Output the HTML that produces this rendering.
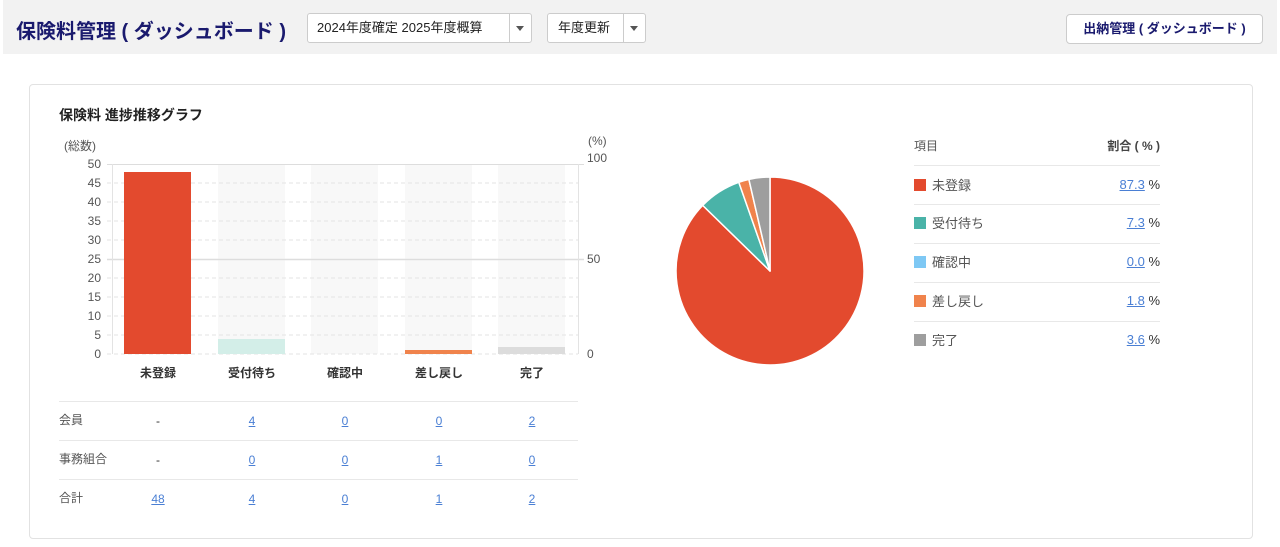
<!DOCTYPE html>
<html><head><meta charset="utf-8"><style>
*{margin:0;padding:0;box-sizing:border-box}
body{width:1280px;height:547px;background:#fff;font-family:"Liberation Sans","Noto Sans CJK JP",sans-serif;position:relative;overflow:hidden;color:#333}
.a{position:absolute;white-space:nowrap}
.hdr{position:absolute;left:3px;top:0;width:1274px;height:54px;background:#f2f2f2}
.sel{position:absolute;top:13px;height:30px;background:#fff;border:1px solid #ccc;border-radius:3px;font-size:13px;color:#222;line-height:28px}
.sel .c{position:absolute;right:0;top:0;width:22px;height:28px;border-left:1px solid #ccc}
.sel .c:after{content:"";position:absolute;left:6px;top:12px;border:4px solid transparent;border-top:5px solid #555}
.card{position:absolute;left:29px;top:84px;width:1224px;height:455px;border:1px solid #e2e2e2;border-radius:4px}
.yl{position:absolute;width:40px;text-align:right;font-size:12px;color:#555;left:61px}
.yr{position:absolute;font-size:12px;color:#555;left:587px}
.hl{position:absolute;left:59px;width:519px;height:1px;background:#e8e8e8}
.ll{position:absolute;left:914px;width:246px;height:1px;background:#e8e8e8}
a{color:#4a7fd4;text-decoration:underline}
.tc{position:absolute;width:40px;text-align:center;font-size:12px}
.xl{position:absolute;width:80px;text-align:center;font-size:12px;font-weight:bold;top:364px;color:#333}
.sw{position:absolute;left:914px;width:12px;height:12px}
.ln{position:absolute;left:932px;font-size:13px;color:#555}
.lv{position:absolute;left:1060px;width:100px;text-align:right;font-size:13px}
</style></head><body>
<div class="hdr"></div>
<div class="a" style="left:16px;top:15px;font-size:20px;font-weight:bold;color:#1a1a6e">保険料管理 ( ダッシュボード )</div>
<div class="sel" style="left:307px;width:225px"><span style="padding-left:9px">2024年度確定 2025年度概算</span><div class="c"></div></div>
<div class="sel" style="left:547px;width:99px"><span style="padding-left:10px">年度更新</span><div class="c"></div></div>
<div class="a" style="left:1066px;top:14px;width:197px;height:30px;background:#fff;border:1px solid #ccc;border-radius:4px;text-align:center;line-height:28px;font-size:13px;font-weight:bold;color:#1a1a6e">出納管理 ( ダッシュボード )</div>
<div class="card"></div>
<div class="a" style="left:59px;top:105px;font-size:14px;font-weight:bold;color:#222">保険料 進捗推移グラフ</div>
<div class="a" style="left:64px;top:137px;font-size:12px;color:#555">(総数)</div>
<div class="a" style="left:588px;top:134px;font-size:12px;color:#555">(%)</div>
<svg class="a" style="left:0;top:0" width="1280" height="547">
<g fill="#f8f8f8"><rect x="218" y="164" width="67" height="190"/><rect x="311" y="164" width="67" height="190"/><rect x="405" y="164" width="67" height="190"/><rect x="498" y="164" width="67" height="190"/></g>
<g stroke="#e3e3e3" stroke-dasharray="4,3">
<line x1="107" x2="578" y1="183" y2="183"/><line x1="107" x2="578" y1="202" y2="202"/><line x1="107" x2="578" y1="221" y2="221"/><line x1="107" x2="578" y1="240" y2="240"/><line x1="107" x2="578" y1="278" y2="278"/><line x1="107" x2="578" y1="297" y2="297"/><line x1="107" x2="578" y1="316" y2="316"/><line x1="107" x2="578" y1="335" y2="335"/><line x1="107" x2="578" y1="354" y2="354"/></g>
<line x1="107" x2="584" y1="164.5" y2="164.5" stroke="#ddd"/>
<line x1="107" x2="584" y1="259.5" y2="259.5" stroke="#ddd" stroke-width="1.5"/>
<line x1="112.5" x2="112.5" y1="164" y2="354" stroke="#e3e3e3"/>
<line x1="578.5" x2="578.5" y1="164" y2="354" stroke="#e3e3e3"/>
<rect x="124" y="172" width="67" height="182" fill="#e34a2e"/>
<rect x="218" y="339" width="67" height="15" fill="#d3eee8"/>
<rect x="405" y="350" width="67" height="4" fill="#f0834c"/>
<rect x="498" y="347" width="67" height="7" fill="#dcdcdc"/>
<g stroke="#fff" stroke-width="1.5" stroke-linejoin="round">
<path d="M770 271 L770 177 A94 94 0 1 1 702.7 205.4 Z" fill="#e34a2e"/>
<path d="M770 271 L702.7 205.4 A94 94 0 0 1 738.8 182.3 Z" fill="#4ab3a8"/>
<path d="M770 271 L738.8 182.3 A94 94 0 0 1 748.9 179.4 Z" fill="#f0834c"/>
<path d="M770 271 L748.9 179.4 A94 94 0 0 1 770 177 Z" fill="#9e9e9e"/>
</g>
</svg>
<div class="yl" style="top:157px">50</div><div class="yl" style="top:176px">45</div><div class="yl" style="top:195px">40</div><div class="yl" style="top:214px">35</div><div class="yl" style="top:233px">30</div><div class="yl" style="top:252px">25</div><div class="yl" style="top:271px">20</div><div class="yl" style="top:290px">15</div><div class="yl" style="top:309px">10</div><div class="yl" style="top:328px">5</div><div class="yl" style="top:347px">0</div>
<div class="yr" style="top:151px">100</div><div class="yr" style="top:252px">50</div><div class="yr" style="top:347px">0</div>
<div class="xl" style="left:118px">未登録</div><div class="xl" style="left:212px">受付待ち</div><div class="xl" style="left:305px">確認中</div><div class="xl" style="left:399px">差し戻し</div><div class="xl" style="left:492px">完了</div>
<div class="hl" style="top:401px"></div><div class="hl" style="top:440px"></div><div class="hl" style="top:479px"></div>
<div class="a" style="left:59px;top:411px;font-size:12px;color:#555">会員</div>
<div class="a" style="left:59px;top:450px;font-size:12px;color:#555">事務組合</div>
<div class="a" style="left:59px;top:489px;font-size:12px;color:#555">合計</div>
<div class="tc" style="left:138px;top:414px">-</div><div class="tc" style="left:232px;top:414px"><a>4</a></div><div class="tc" style="left:325px;top:414px"><a>0</a></div><div class="tc" style="left:419px;top:414px"><a>0</a></div><div class="tc" style="left:512px;top:414px"><a>2</a></div>
<div class="tc" style="left:138px;top:453px">-</div><div class="tc" style="left:232px;top:453px"><a>0</a></div><div class="tc" style="left:325px;top:453px"><a>0</a></div><div class="tc" style="left:419px;top:453px"><a>1</a></div><div class="tc" style="left:512px;top:453px"><a>0</a></div>
<div class="tc" style="left:138px;top:492px"><a>48</a></div><div class="tc" style="left:232px;top:492px"><a>4</a></div><div class="tc" style="left:325px;top:492px"><a>0</a></div><div class="tc" style="left:419px;top:492px"><a>1</a></div><div class="tc" style="left:512px;top:492px"><a>2</a></div>
<div class="a" style="left:914px;top:137px;font-size:12px;color:#555">項目</div>
<div class="a" style="left:1060px;width:100px;text-align:right;top:137px;font-size:12px;font-weight:bold;color:#444">割合 ( % )</div>
<div class="ll" style="top:165px"></div><div class="ll" style="top:204px"></div><div class="ll" style="top:243px"></div><div class="ll" style="top:282px"></div><div class="ll" style="top:321px"></div>
<div class="sw" style="top:179px;background:#e34a2e"></div><div class="ln" style="top:175px">未登録</div><div class="lv" style="top:177px"><a>87.3</a> %</div>
<div class="sw" style="top:217px;background:#4ab3a8"></div><div class="ln" style="top:213px">受付待ち</div><div class="lv" style="top:215px"><a>7.3</a> %</div>
<div class="sw" style="top:256px;background:#7ec8f4"></div><div class="ln" style="top:252px">確認中</div><div class="lv" style="top:254px"><a>0.0</a> %</div>
<div class="sw" style="top:295px;background:#f0834c"></div><div class="ln" style="top:291px">差し戻し</div><div class="lv" style="top:293px"><a>1.8</a> %</div>
<div class="sw" style="top:334px;background:#9e9e9e"></div><div class="ln" style="top:330px">完了</div><div class="lv" style="top:332px"><a>3.6</a> %</div>
</body></html>
